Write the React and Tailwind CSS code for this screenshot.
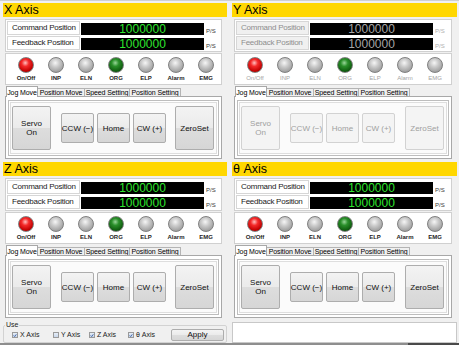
import React from 'react'

const ledBg = {
  red: 'bg-[radial-gradient(circle_at_45%_35%,#ffc0c0_0%,#f42a2a_30%,#c00000_70%,#6a0000_100%)]',
  gray: 'bg-[radial-gradient(circle_at_45%_35%,#f6f6f6_0%,#cacaca_35%,#a0a0a0_75%,#7a7a7a_100%)]',
  green: 'bg-[radial-gradient(circle_at_45%_35%,#9ad69a_0%,#2a8f2a_30%,#0f5c0f_70%,#053405_100%)]',
}

const leds = [
  ['red', 'On/Off'],
  ['gray', 'INP'],
  ['gray', 'ELN'],
  ['green', 'ORG'],
  ['gray', 'ELP'],
  ['gray', 'Alarm'],
  ['gray', 'EMG'],
]

function Led({ color, label, disabled }) {
  return (
    <div className="flex w-[30px] flex-col items-center">
      <div className={`h-[16px] w-[16px] rounded-full border border-[#808080] ${ledBg[color]}`} />
      <span
        className={
          disabled
            ? 'mt-[2px] text-[6px] leading-[7px] text-[#a4a4a4]'
            : 'mt-[2px] text-[6px] font-bold leading-[7px] text-[#1e1e1e]'
        }
      >
        {label}
      </span>
    </div>
  )
}

function PosRow({ label, disabled }) {
  return (
    <div className="flex h-[14px] items-end">
      <div
        className={
          disabled
            ? 'flex h-[14px] w-[73px] items-center whitespace-nowrap border border-[#d6d6d6] bg-[#f0f0f0] pl-[4px] text-[8px] tracking-[-0.25px] text-[#8e8e8e]'
            : 'flex h-[14px] w-[73px] items-center whitespace-nowrap border border-[#d6d6d6] bg-white pl-[4px] text-[8px] tracking-[-0.25px] text-[#1a1a1a]'
        }
      >
        {label}
      </div>
      <div
        className={
          disabled
            ? 'ml-[1px] flex h-[12px] w-[123px] items-center justify-center bg-black text-[12px] leading-none text-[#a6a6a6]'
            : 'ml-[1px] flex h-[12px] w-[123px] items-center justify-center bg-black text-[12px] leading-none text-[#2ee62e]'
        }
      >
        1000000
      </div>
      <span className={disabled ? 'mb-[1px] ml-[2px] text-[6px] leading-none text-[#b0b0b0]' : 'mb-[1px] ml-[2px] text-[6px] leading-none text-[#3a3a3a]'}>
        P/S
      </span>
    </div>
  )
}

function Btn({ children, big, disabled }) {
  const size = big ? 'h-[44px] w-[39px]' : 'h-[30px] w-[33px]'
  return (
    <div
      className={
        disabled
          ? `${size} flex items-center justify-center whitespace-nowrap rounded-[2px] border border-[#d2d2d2] bg-[#f4f4f4] text-center text-[8px] leading-[9px] text-[#a0a0a0]`
          : `${size} flex items-center justify-center whitespace-nowrap rounded-[2px] border border-[#adadad] bg-[linear-gradient(#f3f3f3_0%,#ebebeb_50%,#dddddd_51%,#d6d6d6_100%)] text-center text-[8px] leading-[9px] text-[#111]`
      }
    >
      {children}
    </div>
  )
}

function Panel({ title, disabled }) {
  return (
    <div className="flex h-[159px] flex-col">
      <div className="h-[14px] bg-[#ffd700] pl-[1px] text-[12.5px] leading-[14px] text-black">{title}</div>
      <div className="flex flex-col pl-[2px] pr-[5px] pt-[2px]">
        <div className="flex flex-col gap-[1px] border border-[#d0d0d0] bg-white p-[1px]">
          <PosRow label="Command Position" disabled={disabled} />
          <PosRow label="Feedback Position" disabled={disabled} />
        </div>
        <div className="mt-[1px] flex h-[32px] border border-[#d0d0d0] bg-white pl-[5px] pt-[3px]">
          {leds.map(([c, l]) => (
            <Led key={l} color={c} label={l} disabled={disabled} />
          ))}
        </div>
        <div className="mt-[1px] flex h-[10px] items-end whitespace-nowrap pl-[1px] text-[7px] leading-[7px] tracking-[-0.1px] text-black">
          <div className="relative z-10 -mb-px flex h-[11px] w-[32px] items-center justify-center border border-b-0 border-[#a8a8a8] bg-white">Jog Move</div>
          <div className="flex h-[8px] w-[47px] items-center justify-center border border-l-0 border-b-0 border-[#b4b4b4] bg-[#f0f0f0]">Position Move</div>
          <div className="flex h-[8px] w-[45px] items-center justify-center border border-l-0 border-b-0 border-[#b4b4b4] bg-[#f0f0f0]">Speed Setting</div>
          <div className="flex h-[8px] w-[51px] items-center justify-center border border-l-0 border-b-0 border-[#b4b4b4] bg-[#f0f0f0]">Position Setting</div>
        </div>
        <div className="h-[63px] border border-[#a8a8a8] bg-white px-[2px] pb-[2px] pt-[3px]">
          <div className="flex h-[56px] items-center border border-[#bdbdbd] bg-[#fbfbfb] pl-[3px] pr-[4px] shadow-[inset_0_0_0_1px_#ffffff,inset_0_0_0_2px_#dedede]">
            <Btn big disabled={disabled}>
              Servo
              <br />
              On
            </Btn>
            <div className="ml-[10px] flex gap-[3px]">
              <Btn disabled={disabled}>CCW (−)</Btn>
              <Btn disabled={disabled}>Home</Btn>
              <Btn disabled={disabled}>CW (+)</Btn>
            </div>
            <div className="ml-auto">
              <Btn big disabled={disabled}>ZeroSet</Btn>
            </div>
          </div>
        </div>
      </div>
    </div>
  )
}

function Check({ checked, label, w }) {
  return (
    <div className={`flex items-center ${w}`}>
      <div className="flex h-[6px] w-[6px] items-center justify-center border border-[#9a9a9a] bg-[linear-gradient(#e6eef8,#c8d6ea)]">
        {checked && (
          <svg viewBox="0 0 6 6" className="h-[5px] w-[5px]">
            <path d="M1 3 L2.5 4.5 L5 1.2" fill="none" stroke="#2a4f9a" strokeWidth="1.2" />
          </svg>
        )}
      </div>
      <span className="ml-[2px] whitespace-nowrap text-[7px] leading-[8px] text-[#222]">{label}</span>
    </div>
  )
}

export default function App() {
  return (
    <div className="flex h-[345px] w-[459px] flex-col overflow-hidden bg-[#f0f0f0] font-['Liberation_Sans',Arial,sans-serif]">
      <div className="h-[3px] border-t border-[#cfcfcf]" />
      <div className="flex flex-1 gap-[5px] pl-[3px]">
        <div className="flex w-[224px] flex-col">
          <Panel title="X Axis" />
          <Panel title="Z Axis" />
          <fieldset className="h-[22px] rounded-[2px] border border-[#d2d2d2] px-[0px]">
            <legend className="ml-[1px] px-[1px] text-[7px] leading-[8px] text-[#222]">Use</legend>
            <div className="flex h-[12px] items-center pl-[8px]">
              <Check checked label="X Axis" w="w-[41px]" />
              <Check label="Y Axis" w="w-[36px]" />
              <Check checked label="Z Axis" w="w-[39px]" />
              <Check checked label="θ Axis" w="w-[30px]" />
              <div className="ml-auto mr-[2px] flex h-[12px] w-[53px] items-center justify-center rounded-[2px] border border-[#adadad] bg-[linear-gradient(#f3f3f3_0%,#ebebeb_50%,#dddddd_51%,#d6d6d6_100%)] text-[8px] text-[#111]">
                Apply
              </div>
            </div>
          </fieldset>
        </div>
        <div className="flex w-[225px] flex-col">
          <Panel title="Y Axis" disabled />
          <Panel title="θ Axis" />
          <div className="mt-[1px] h-[21px] border border-[#c8c8c8] bg-white" />
        </div>
      </div>
      <div className="flex h-[2px]">
        <div className="w-[408px] bg-[#8e8e8e]" />
        <div className="flex-1 bg-[#4a4a4a]" />
      </div>
    </div>
  )
}
